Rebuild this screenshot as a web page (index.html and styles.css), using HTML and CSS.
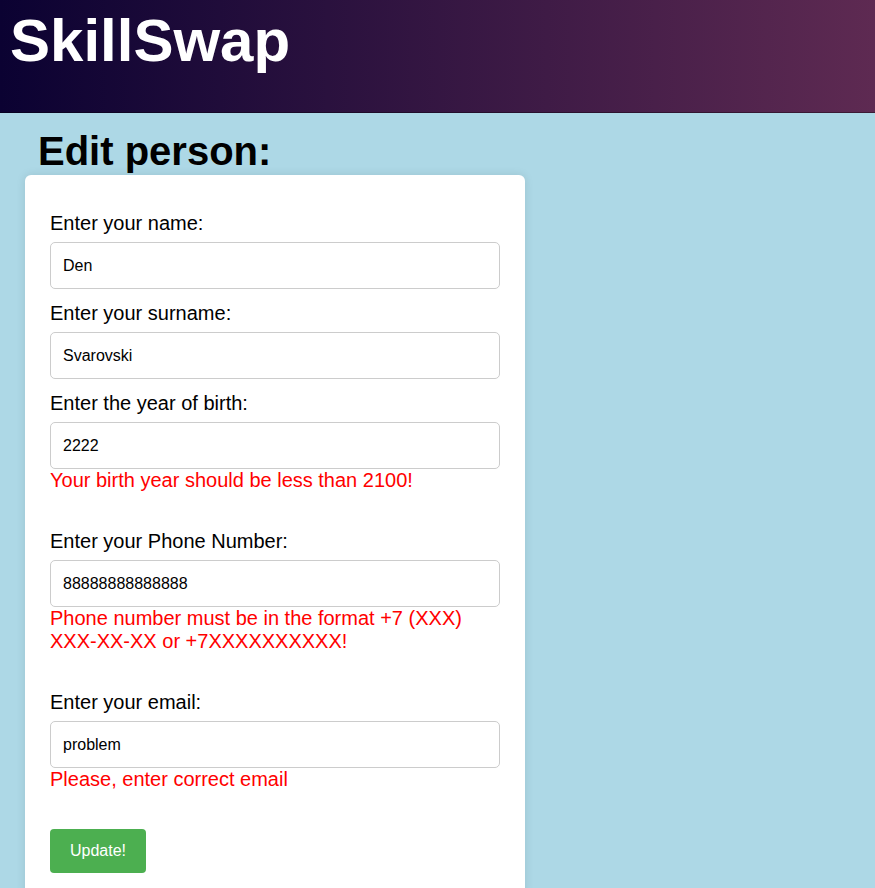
FILE: index.html
```html
<!DOCTYPE html>
<html lang="en">
<head>
<meta charset="utf-8">
<title>SkillSwap</title>
<link rel="stylesheet" href="styles.css">
</head>
<body>
<header class="site-header">
  <h1 class="brand">SkillSwap</h1>
</header>
<main class="page">
  <h2 class="page-title">Edit person:</h2>
  <form class="card">
    <label class="label" for="name">Enter your name:</label>
    <input class="input" id="name" type="text" value="Den">

    <label class="label" for="surname">Enter your surname:</label>
    <input class="input" id="surname" type="text" value="Svarovski">

    <label class="label" for="year">Enter the year of birth:</label>
    <input class="input input-invalid" id="year" type="text" value="2222">
    <p class="error">Your birth year should be less than 2100!</p>

    <label class="label" for="phone">Enter your Phone Number:</label>
    <input class="input input-invalid" id="phone" type="text" value="88888888888888">
    <p class="error">Phone number must be in the format +7 (XXX) XXX-XX-XX or +7XXXXXXXXXX!</p>

    <label class="label" for="email">Enter your email:</label>
    <input class="input input-invalid" id="email" type="text" value="problem">
    <p class="error">Please, enter correct email</p>

    <button class="btn" type="button">Update!</button>
  </form>
</main>
</body>
</html>
```

FILE: styles.css
```css
* { box-sizing: border-box; }

html, body {
  margin: 0;
  padding: 0;
}

body {
  background: #add8e6;
  font-family: "Liberation Sans", Arial, sans-serif;
  color: #000;
  min-height: 888px;
}

.site-header {
  height: 113px;
  background: linear-gradient(to right, #0b0232, #5e2a52);
  border-bottom: 1px solid rgba(0, 0, 0, 0.35);
  padding: 6px 10px 0;
}

.brand {
  margin: 0;
  font-size: 60px;
  font-weight: bold;
  line-height: 69px;
  color: #fff;
}

.page {
  padding: 0 25px;
}

.page-title {
  margin: 15px 0 1px 13px;
  font-size: 40px;
  line-height: 46px;
  font-weight: bold;
}

.card {
  width: 500px;
  background: #fff;
  border-radius: 6px;
  box-shadow: 0 0 10px rgba(0, 0, 0, 0.1);
  padding: 37px 25px 25px;
}

.label {
  display: block;
  font-size: 20px;
  line-height: 23px;
  margin-bottom: 7px;
}

.input {
  display: block;
  width: 450px;
  height: 47px;
  margin: 0 0 13px;
  padding: 0 12px;
  border: 1px solid #ccc;
  border-radius: 5px;
  font-family: "Liberation Sans", Arial, sans-serif;
  font-size: 16px;
  color: #000;
  background: #fff;
}

.input-invalid {
  margin-bottom: 0;
}

.error {
  margin: 0 0 38px;
  font-size: 20px;
  line-height: 23px;
  color: #ff0000;
}

.btn {
  display: block;
  height: 44px;
  padding: 0 20px;
  border: none;
  border-radius: 4px;
  background: #4caf50;
  color: #fff;
  font-family: "Liberation Sans", Arial, sans-serif;
  font-size: 16px;
}
```
